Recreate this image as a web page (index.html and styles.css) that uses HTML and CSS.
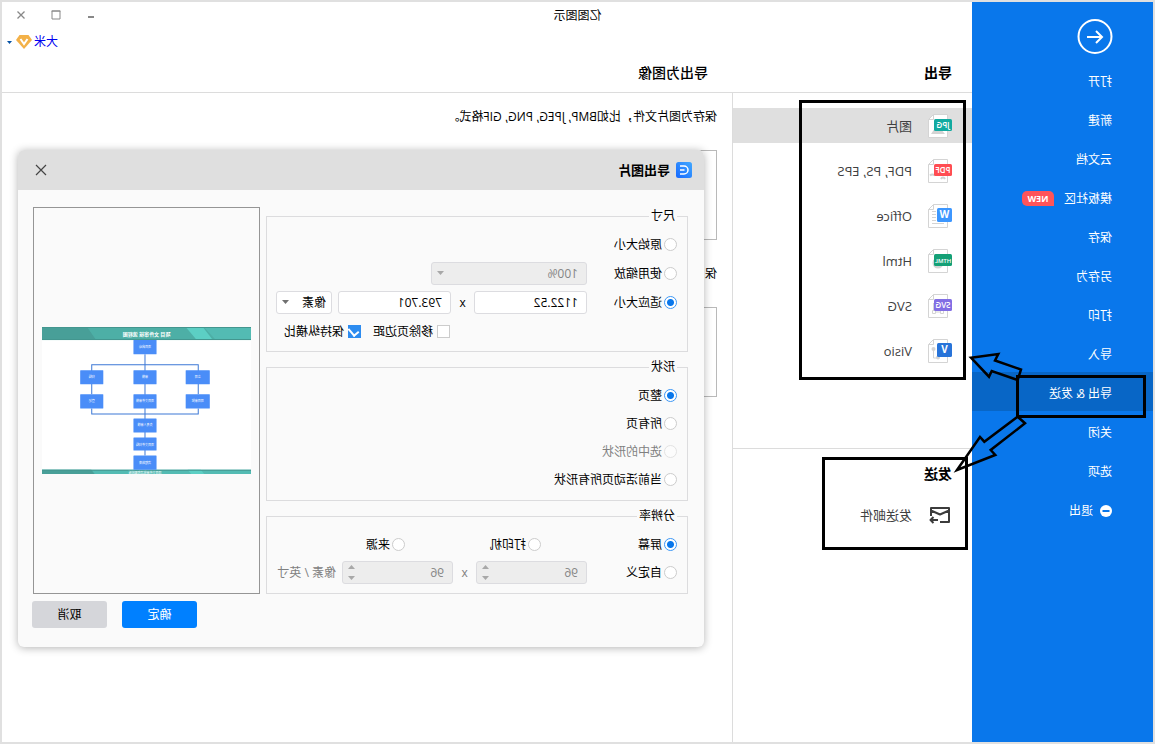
FILE: index.html
```html
<!DOCTYPE html>
<html lang="zh-CN">
<head>
<meta charset="utf-8">
<title>亿图图示</title>
<link rel="stylesheet" href="styles.css">
</head>
<body>
<div class="app">
  <nav class="sidebar">
    <button class="back" aria-label="返回">
      <svg width="36" height="36" viewBox="0 0 36 36" fill="none" stroke="#fff" stroke-width="2"><circle cx="18" cy="17.500" r="16.500"/><path d="M26 18H11M17 12L11 18L17 24"/></svg>
    </button>
    <a class="nav-item" href="#">打开</a>
    <a class="nav-item" href="#">新建</a>
    <a class="nav-item" href="#">云文档</a>
    <a class="nav-item" href="#">模板社区<span class="new">NEW</span></a>
    <a class="nav-item" href="#">保存</a>
    <a class="nav-item" href="#">另存为</a>
    <a class="nav-item" href="#">打印</a>
    <a class="nav-item" href="#">导入</a>
    <a class="nav-item active" href="#">导出 &amp; 发送</a>
    <a class="nav-item" href="#">关闭</a>
    <a class="nav-item" href="#">选项</a>
    <a class="nav-item" href="#"><svg class="exit" width="12" height="12" viewBox="0 0 12 12"><circle cx="6" cy="6" r="6" fill="#fff"/><path d="M2.500 6h7" stroke="#0977eb" stroke-width="2"/></svg>退出</a>
  </nav>

  <div class="main">
    <header class="heads">
      <h2 class="head-export">导出</h2>
      <h1 class="head-image">导出为图像</h1>
    </header>
    <div class="columns">
      <section class="kinds">
        <div class="kind-list">
          <a class="kind selected" href="#">
            <svg width="24" height="24" viewBox="0 0 24 24"><path d="M4.500.5H18.500l5 5v18H4.500z" fill="#fff" stroke="#d4d4d4"/><path d="M18.500 .5v5h5" fill="none" stroke="#d4d4d4"/><path d="M7 20l5-6 3 2 2-2 4 6z" fill="#d4d4d4"/><rect y="5" width="18" height="12" rx="1.500" fill="#12aaa0"/><text class="tag" x="9" y="14">JPG</text></svg>图片</a>
          <a class="kind" href="#">
            <svg width="24" height="24" viewBox="0 0 24 24"><path d="M4.500.5H18.500l5 5v18H4.500z" fill="#fff" stroke="#d4d4d4"/><path d="M18.500 .5v5h5" fill="none" stroke="#d4d4d4"/><path d="M7 20c1-2 3-2 4 0M17 16.500c2-1.500 4-1 5 0" fill="none" stroke="#d0d0d0" stroke-width="2"/><rect y="5" width="18" height="12" rx="1.500" fill="#ff4d52"/><text class="tag" x="9" y="14">PDF</text></svg>PDF, PS, EPS</a>
          <a class="kind" href="#">
            <svg width="24" height="24" viewBox="0 0 24 24"><path d="M4.500.5H18.500l5 5v18H4.500z" fill="#fff" stroke="#d4d4d4"/><path d="M18.500 .5v5h5M16 7.500h4M16 10.500h4M16 13.500h4M16 16.500h4M8 19.500h12" fill="none" stroke="#d4d4d4"/><rect y="4" width="15" height="14" rx="1.500" fill="#3d97ff"/><text class="tag letter" x="7.500" y="14">W</text></svg>Office</a>
          <a class="kind" href="#">
            <svg width="24" height="24" viewBox="0 0 24 24"><path d="M4.500.5H18.500l5 5v18H4.500z" fill="#fff" stroke="#d4d4d4"/><path d="M18.500 .5v5h5" fill="none" stroke="#d4d4d4"/><circle cx="14" cy="14" r="5.500" fill="#d4d4d4"/><rect y="5" width="18" height="12" rx="1.500" fill="#14a076"/><text class="tag long" x="9" y="13.500">HTML</text></svg>Html</a>
          <a class="kind" href="#">
            <svg width="24" height="24" viewBox="0 0 24 24"><path d="M4.500.5H18.500l5 5v18H4.500z" fill="#fff" stroke="#d4d4d4"/><path d="M18.500 .5v5h5M8.500 16.500h3v3h-3zM16.500 16.500h3v3h-3zM11.500 18h5M18.500 9v8" fill="none" stroke="#d4d4d4"/><rect y="5" width="18" height="12" rx="1.500" fill="#826ee4"/><text class="tag" x="9" y="14">SVG</text></svg>SVG</a>
          <a class="kind" href="#">
            <svg width="24" height="24" viewBox="0 0 24 24"><path d="M4.500.5H18.500l5 5v18H4.500z" fill="#fff" stroke="#d4d4d4"/><path d="M18.500 .5v5h5M18.500 10v9H14" fill="none" stroke="#d4d4d4"/><circle cx="18.500" cy="10" r="2" fill="#d4d4d4"/><circle cx="14" cy="18.500" r="2" fill="#d4d4d4"/><rect y="4" width="15" height="14" rx="1.500" fill="#2874d9"/><text class="tag letter" x="7.500" y="14">V</text></svg>Visio</a>
        </div>
        <div class="send">
          <h2 class="send-title">发送</h2>
          <a class="kind mail" href="#">
            <svg width="24" height="24" viewBox="0 0 24 24" fill="none" stroke="#3c3c3c" stroke-width="2" stroke-linejoin="round"><path d="M12 19H3V5h18v8M3 7.500l9 4 9-4M14 17h8M18.500 14l3 3-3 3"/></svg>发送邮件</a>
        </div>
      </section>
      <section class="detail">
        <p class="desc">保存为图片文件，比如BMP, JPEG, PNG, GIF格式。</p>
        <div class="tile"></div>
        <p class="desc second">保</p>
        <div class="tile"></div>
      </section>
    </div>
  </div>

  <div class="titlebar">亿图图示
    <div class="winbtns">
      <button aria-label="最小化"><svg width="10" height="10" viewBox="0 0 10 10"><path d="M2 7h6" stroke="#888" stroke-width="2"/></svg></button>
      <button aria-label="最大化"><svg width="10" height="10" viewBox="0 0 10 10"><path d="M1 1h8v8H1z" fill="none" stroke="#888"/><path d="M.5 1h9" stroke="#888"/></svg></button>
      <button aria-label="关闭"><svg width="10" height="10" viewBox="0 0 10 10"><path d="M1.500 1.500l7 7M8.500 1.500l-7 7" stroke="#888" stroke-width="1.300"/></svg></button>
    </div>
    <div class="account">
      <a href="#">大米</a>
      <svg width="16" height="14" viewBox="0 0 16 14"><path d="M3.500 0h9L16 5 8 14 0 5z" fill="#f3b148"/><path d="M4.500 4L8 9l3.500-5" fill="none" stroke="#fff" stroke-width="2"/></svg>
      <svg class="drop" width="5" height="3" viewBox="0 0 5 3"><path d="M0 0h5L2.500 3z" fill="#0552a5"/></svg>
    </div>
  </div>

  <form class="dialog">
    <div class="dialog-head">
      <svg width="16" height="16" viewBox="0 0 16 16"><defs><linearGradient id="lg" x1="0" y1="0" x2="1" y2="1"><stop offset="0" stop-color="#42a9ff"/><stop offset="1" stop-color="#1668ff"/></linearGradient></defs><rect width="16" height="16" rx="2.500" fill="url(#lg)"/><path d="M12 4H8a4 4 0 000 8h4M7.500 8H12" fill="none" stroke="#fff" stroke-width="1.500"/></svg>
      <h2>导出图片</h2>
      <button type="button" class="x" aria-label="关闭"><svg width="12" height="12" viewBox="0 0 12 12"><path d="M1 1l10 10M11 1L1 11" stroke="#444" stroke-width="1.200"/></svg></button>
    </div>
    <div class="dialog-body">
      <div class="groups">
        <fieldset class="size">
          <legend>尺寸</legend>
          <div class="row"><label><input type="radio" name="size">原始大小</label></div>
          <div class="row"><label class="first"><input type="radio" name="size">使用缩放</label>
            <span class="select wide"><select disabled aria-label="缩放"><option>100%</option></select></span></div>
          <div class="row"><label class="first"><input type="radio" name="size" checked>适应大小</label>
            <input class="field" type="text" value="1122.52" aria-label="宽"><span class="by">x</span><input class="field" type="text" value="793.701" aria-label="高">
            <span class="select unit"><select aria-label="单位"><option>像素</option></select></span></div>
          <div class="row checks"><label><input type="checkbox">移除页边距</label><label><input type="checkbox" checked>保持纵横比</label></div>
        </fieldset>
        <fieldset>
          <legend>形状</legend>
          <div class="row"><label><input type="radio" name="shape" checked>整页</label></div>
          <div class="row"><label><input type="radio" name="shape">所有页</label></div>
          <div class="row"><label class="off"><input type="radio" name="shape" disabled>选中的形状</label></div>
          <div class="row"><label><input type="radio" name="shape">当前活动页所有形状</label></div>
        </fieldset>
        <fieldset>
          <legend>分辨率</legend>
          <div class="row thirds"><label><input type="radio" name="dpi" checked>屏幕</label><label><input type="radio" name="dpi">打印机</label><label><input type="radio" name="dpi">来源</label></div>
          <div class="row"><label class="first"><input type="radio" name="dpi">自定义</label>
            <span class="spin"><input class="field" type="text" value="96" disabled aria-label="横向分辨率"></span><span class="by off">x</span><span class="spin"><input class="field" type="text" value="96" disabled aria-label="纵向分辨率"></span>
            <span class="per off">像素 / 英寸</span></div>
        </fieldset>
      </div>
      <div class="preview">
        <svg viewBox="0 0 208 147">
          <rect width="208" height="147" fill="#fff"/>
          <rect width="208" height="13" fill="#53bbb3"/><path d="M47 0L35 13H154L163 0z" fill="#4dafa6"/><path d="M48 0h17L54 13H38z" fill="#5ccfc4"/><path d="M163 0h45v13h-54z" fill="#489f98"/>
          <path d="M0 .5h208M0 12.500h208" stroke="#43968f"/>
          <rect y="142" width="208" height="5" fill="#53bbb3"/><path d="M159 142h49v5h-53z" fill="#489f98"/><path d="M50 142h13l-4 5H46z" fill="#5ccfc4"/><path d="M0 142.500h208" stroke="#43968f"/>
          <path d="M105.500 27v101M52.500 81v5.500h106V81M52.500 67V37.500h106V67" fill="none" stroke="#3d78d6"/>
          <g fill="#4a8df8"><rect x="94" y="13" width="23" height="14" rx=".5"/><rect x="41" y="43" width="24" height="14" rx=".5"/><rect x="94" y="43" width="23" height="14" rx=".5"/><rect x="147" y="43" width="23" height="14" rx=".5"/><rect x="41" y="67" width="24" height="14" rx=".5"/><rect x="94" y="67" width="23" height="14" rx=".5"/><rect x="147" y="67" width="23" height="14" rx=".5"/><rect x="94" y="91" width="23" height="14" rx=".5"/><rect x="94" y="110" width="23" height="13" rx=".5"/><rect x="94" y="128" width="23" height="14" rx=".5"/></g>
          <g class="tiny"><text x="105.500" y="21">项目启动</text><text x="53" y="51">立项</text><text x="105.500" y="51">审核</text><text x="158.500" y="51">归档</text><text x="53" y="75">项目审批</text><text x="105.500" y="75">项目文件审核</text><text x="158.500" y="75">登记</text><text x="105.500" y="99">负责人审核</text><text x="105.500" y="118">项目文件归档</text><text x="105.500" y="136">流程结束</text><text x="105.500" y="146">项目文件审批流程图模板</text></g>
          <text class="caption" x="104" y="9">项目 文件审核 流程图</text>
        </svg>
      </div>
    </div>
    <div class="actions"><button type="button" class="ok">确定</button><button type="button">取消</button></div>
  </form>

  <svg class="marks" width="400" height="560" viewBox="0 0 400 560" fill="none" stroke="#000" stroke-width="3">
    <rect x="190.500" y="101.500" width="164" height="277"/>
    <rect x="188.500" y="458.500" width="143" height="90"/>
    <rect x="10.500" y="376.500" width="127" height="40"/>
    <path stroke-width="2.500" d="M184 357.700L156.700 354 160 360.500 134 369.500 137.300 380 163.300 371 166 376.700z"/>
    <path stroke-width="2.500" d="M198 470L175 437 170.700 441.700 137.300 416.700 130 423.300 164.300 450 159.700 455z"/>
  </svg>
</div>
</body>
</html>
```

FILE: styles.css
```css
* { box-sizing: border-box; }

body {
  margin: 0;
  font: 12px/18px "Open Sans", "Noto Sans CJK SC", sans-serif;
  color: #000;
}

h1, h2, p { margin: 0; }
a { text-decoration: none; }
svg { flex: none; }

button, input, select { font: inherit; color: inherit; }

button {
  border: 0;
  padding: 0;
  background: none;
}

/* The whole window is shown flipped left to right. */
.app {
  position: relative;
  display: flex;
  min-height: 100vh;
  border: 2px solid #e0e0e0;
  background: #fff;
  transform: scaleX(-1);
}

.sidebar {
  flex: none;
  width: 181px;
  padding-top: 17px;
  background: #0977eb;
}

.back {
  display: block;
  height: 36px;
  margin: 0 0 5px 40px;
}

.nav-item {
  display: flex;
  align-items: center;
  height: 39px;
  padding: 4px 0 0 41px;
  color: #fff;
}

.nav-item.active { background: #0866c6; }

.new {
  width: 32px;
  margin-left: 10px;
  border-radius: 5px 5px 5px 0;
  background: #ff5459;
  font-size: 9px;
  font-weight: 700;
  line-height: 15px;
  text-align: center;
}

.exit { margin-right: 7px; }

.main {
  flex: 1;
  display: flex;
  flex-direction: column;
}

.heads {
  display: flex;
  align-items: flex-end;
  height: 91px;
  padding: 0 20px 9px;
  border-bottom: 1px solid #dcdcdc;
}

.heads h1, .heads h2 {
  font-size: 14px;
  line-height: 20px;
}

.head-export { width: 244px; }
.heads .head-image { font-weight: 500; }

.columns {
  flex: 1;
  display: flex;
}

.kinds {
  width: 240px;
  border-right: 1px solid #dcdcdc;
}

.kind-list {
  display: grid;
  gap: 10px;
  padding: 15px 0 80px;
}

.kind {
  display: flex;
  align-items: center;
  gap: 16px;
  height: 35px;
  padding-left: 20px;
  color: #404040;
  font-size: 13px;
}

.kind.selected { background: #dfdfdf; }

.tag {
  fill: #fff;
  font-size: 8px;
  font-weight: 600;
  text-anchor: middle;
}

.tag.letter {
  font-size: 10px;
  font-weight: 700;
}

.tag.long { font-size: 6px; }

.send {
  padding-top: 15px;
  border-top: 1px solid #dcdcdc;
}

.send-title {
  padding-left: 20px;
  font-size: 14px;
  line-height: 20px;
}

.mail { margin-top: 13px; }

.detail {
  flex: 1;
  padding: 15px 40px 0 15px;
}

.tile {
  height: 90px;
  margin-top: 24px;
  border: 1px solid #b9b9b9;
}

.second { margin-top: 25px; }

.titlebar {
  position: absolute;
  top: 5px;
  left: 0;
  right: 0;
  text-align: center;
}

.winbtns {
  position: absolute;
  top: -1px;
  right: 14px;
  display: flex;
  gap: 25px;
}

.winbtns button {
  display: flex;
  align-items: center;
  height: 18px;
}

.account {
  position: absolute;
  top: 26px;
  right: 5px;
  display: flex;
  align-items: center;
  gap: 2px;
}

.account a { color: #0000f0; }
.drop { margin-left: 2px; }

.dialog {
  position: absolute;
  top: 148px;
  left: 449px;
  right: 16px;
  border-radius: 6px;
  background: #fafafa;
  box-shadow: 0 1px 8px rgba(0, 0, 0, .3);
}

.dialog-head {
  display: flex;
  align-items: center;
  gap: 6px;
  height: 40px;
  padding: 0 17px 0 12px;
  border-radius: 6px 6px 0 0;
  background: #dfdfdf;
}

.dialog-head h2 { font-size: 13px; }

.x {
  display: flex;
  margin-left: auto;
}

.dialog-body {
  display: grid;
  grid-template-columns: 1fr 227px;
  gap: 6px;
  padding: 17px 15px 0 16px;
}

.groups {
  display: grid;
  align-content: start;
  gap: 6px;
}

fieldset {
  display: grid;
  gap: 5px;
  min-width: 0;
  margin: 0;
  padding: 8px 9px 9px 10px;
  border: 1px solid #dcdcde;
}

.size {
  gap: 6px;
  padding-bottom: 8px;
}

legend { padding: 0 2px; }

.row {
  display: flex;
  align-items: center;
  height: 23px;
}

label {
  display: flex;
  align-items: center;
  gap: 2px;
  white-space: nowrap;
}

.first { flex: 0 0 90px; }
.thirds label { flex: 0 0 136px; }
.off { color: #808080; }

input[type="radio"], input[type="checkbox"] {
  appearance: none;
  flex: none;
  width: 13px;
  height: 13px;
  margin: 0;
  border: 1px solid #ccc;
  background: #fff;
}

input[type="radio"] { border-radius: 50%; }
input[type="radio"]:disabled { opacity: .5; }

input[type="radio"]:checked {
  border-color: #3d97f5;
  background: radial-gradient(circle, #0977eb 0 3px, #fff 4px);
}

.checks {
  gap: 12px;
  padding-left: 227px;
}

.checks label { gap: 4px; }

input[type="checkbox"]:checked {
  position: relative;
  border-color: #2d8cf0;
  background: #2d8cf0;
}

input[type="checkbox"]:checked::after {
  content: "";
  position: absolute;
  top: 0;
  left: 3px;
  width: 5px;
  height: 8px;
  border: solid #fff;
  border-width: 0 2px 2px 0;
  transform: rotate(40deg);
}

.field, select {
  appearance: none;
  height: 23px;
  margin: 0;
  padding: 0 8px;
  border: 1px solid #dcdce0;
  border-radius: 3px;
  background: #fff;
}

.field { width: 113px; }

.field:disabled, select:disabled {
  background: #ededed;
  color: #858585;
  opacity: 1;
}

.by {
  width: 23px;
  text-align: center;
}

.select, .spin {
  position: relative;
  display: block;
}

.select select { width: 100%; }
.wide { width: 156px; }

.unit {
  width: 56px;
  margin-left: 6px;
}

.unit select { padding: 0 5px; }

.select::after, .spin::before, .spin::after {
  content: "";
  position: absolute;
  right: 6px;
  width: 7px;
  height: 4px;
  background: #707070;
  clip-path: polygon(0 0, 100% 0, 50% 100%);
}

.select::after { top: 9px; }
.wide::after, .spin::before, .spin::after { background: #a8a8a8; }

.spin::before {
  top: 4px;
  clip-path: polygon(0 100%, 100% 100%, 50% 0);
}

.spin::after { bottom: 4px; }
.spin .field { width: 111px; }

.per {
  margin-left: 6px;
  white-space: nowrap;
}

.preview {
  display: flex;
  align-items: center;
  padding: 0 8px;
  border: 1px solid #959595;
}

.preview svg {
  flex: 1;
  width: 100%;
}

.tiny, .caption {
  fill: #fff;
  font-size: 3px;
  text-anchor: middle;
}

.caption {
  font-size: 5px;
  font-weight: 700;
}

.actions {
  display: flex;
  justify-content: flex-end;
  gap: 15px;
  padding: 7px 14px 19px;
}

.actions button {
  width: 75px;
  height: 27px;
  border-radius: 3px;
  background: #d5d6da;
}

.actions .ok {
  background: #0080ff;
  color: #fff;
}

.marks {
  position: absolute;
  top: -2px;
  left: -2px;
  pointer-events: none;
}
```
